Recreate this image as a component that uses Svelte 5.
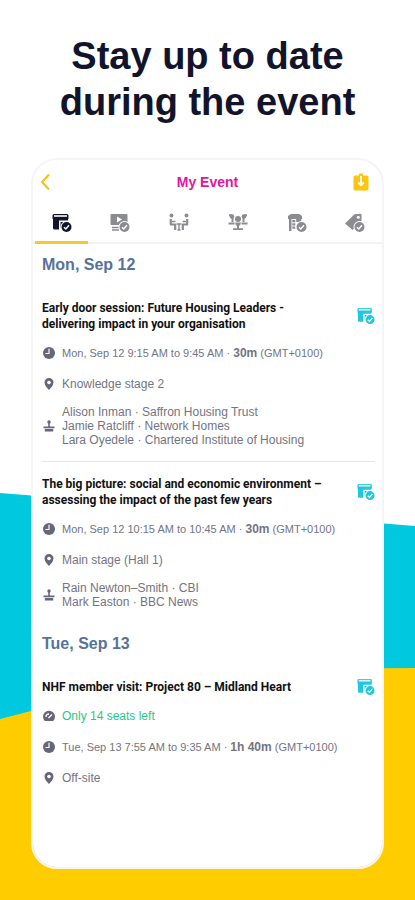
<script>
    const tabs = [
        { id: 'sessions', label: 'Sessions' },
        { id: 'videos', label: 'Videos' },
        { id: 'meetings', label: 'Meetings' },
        { id: 'speakers', label: 'Speakers' },
        { id: 'exhibitors', label: 'Exhibitors' },
        { id: 'offers', label: 'Offers' },
    ];

    const days = [
        {
            name: 'Mon, Sep 12',
            sessions: [
                {
                    title: 'Early door session: Future Housing Leaders - delivering impact in your organisation',
                    time: 'Mon, Sep 12 9:15 AM to 9:45 AM',
                    duration: '30m',
                    place: 'Knowledge stage 2',
                    people: [
                        'Alison Inman · Saffron Housing Trust',
                        'Jamie Ratcliff · Network Homes',
                        'Lara Oyedele · Chartered Institute of Housing',
                    ],
                },
                {
                    title: 'The big picture: social and economic environment – assessing the impact of the past few years',
                    time: 'Mon, Sep 12 10:15 AM to 10:45 AM',
                    duration: '30m',
                    place: 'Main stage (Hall 1)',
                    people: ['Rain Newton–Smith · CBI', 'Mark Easton · BBC News'],
                },
            ],
        },
        {
            name: 'Tue, Sep 13',
            sessions: [
                {
                    title: 'NHF member visit: Project 80 – Midland Heart',
                    seats: 'Only 14 seats left',
                    time: 'Tue, Sep 13 7:55 AM to 9:35 AM',
                    duration: '1h 40m',
                    place: 'Off-site',
                    people: [],
                },
            ],
        },
    ];

    let active = 'sessions';
</script>

{#snippet check()}
    <circle cx="14.5" cy="14" r="6" fill="#fff" />
    <circle cx="14.5" cy="14" r="5" fill="currentColor" />
    <path d="M12 14.200l1.800 1.800 3.200-3.700" fill="none" stroke="#fff" stroke-width="1.400" />
{/snippet}

{#snippet calendar()}
    <path d="M2 1h13a1.500 1.500 0 0 1 1.500 1.500V6H.5V2.500A1.500 1.500 0 0 1 2 1z" fill="currentColor" />
    <path d="M2 3h13" stroke="#fff" stroke-width="2" opacity=".8" />
    <path d="M1 5h15v2.500H7V16.500H2.500A1.500 1.500 0 0 1 1 15z" fill="currentColor" />
    <path d="M8.500 9h5l-2 2-2 3.500H8.500z" fill="currentColor" />
    {@render check()}
{/snippet}

<div class="page">
    <svg class="backdrop" viewBox="0 0 415 900" preserveAspectRatio="none" aria-hidden="true">
        <path d="M0 493L415 526V700L0 740z" fill="#00c8de" />
        <path d="M0 719L135 684Q190 669 260 669L415 668V900H0z" fill="#fc0" />
    </svg>

    <h1>Stay up to date<br />during the event</h1>

    <main class="card">
        <header>
            <button class="back" aria-label="Back">
                <svg width="10" height="18" viewBox="0 0 10 18"><path d="M9 1.500L2 9l7 7.500" fill="none" stroke="currentColor" stroke-width="2" /></svg>
            </button>
            <h2>My Event</h2>
            <button class="save" aria-label="Save to calendar">
                <svg width="16" height="18" viewBox="0 0 16 18">
                    <rect x=".5" y="2.500" width="15" height="15" rx="1.500" fill="currentColor" />
                    <path d="M6 3V1.500a1 1 0 0 1 1-1h2a1 1 0 0 1 1 1V3z" fill="currentColor" />
                    <path d="M8 3v8.500M5.200 9.500L8 12.300l2.800-2.800" fill="none" stroke="#fff" stroke-width="1.800" />
                </svg>
            </button>
        </header>

        <nav>
            {#each tabs as tab}
                <button class="tab" class:active={active === tab.id} aria-label={tab.label} on:click={() => (active = tab.id)}>
                    <svg width="20" height="20" viewBox="0 0 20 20">
                        {#if tab.id === 'sessions'}
                            {@render calendar()}
                        {:else if tab.id === 'videos'}
                            <rect x=".5" y="1" width="17" height="11" rx="1" fill="currentColor" />
                            <path d="M7 3.500v6l5-3z" fill="#fff" />
                            <path d="M2 14.500h7M2 17h7" stroke="currentColor" stroke-width="1.300" />
                            {@render check()}
                        {:else if tab.id === 'meetings'}
                            <circle cx="2.500" cy="2.500" r="1.900" fill="currentColor" />
                            <circle cx="17.500" cy="2.500" r="1.900" fill="currentColor" />
                            <path d="M1.800 6v5.500h4.400V17M18.200 6v5.500h-4.400V17" fill="none" stroke="currentColor" stroke-width="2.200" stroke-linejoin="round" />
                            <path d="M3 8.500h3.500M17 8.500h-3.500M7.500 11h5M10 11v5.500M8.500 17h3" stroke="currentColor" stroke-width="1.400" />
                        {:else if tab.id === 'speakers'}
                            <circle cx="4" cy="3.500" r="2.300" fill="currentColor" />
                            <circle cx="16" cy="3.500" r="2.300" fill="currentColor" />
                            <path d="M1 2.200h3M16 2.200h3M4.500 4v5M15.500 4v5" stroke="currentColor" stroke-width="2" />
                            <path d="M.5 10.500h6M13.500 10.500h6" stroke="currentColor" stroke-width="1.800" />
                            <circle cx="10" cy="6" r="3" fill="currentColor" />
                            <path d="M7 9.500h6l-1 3H8zM9 12h2v4H9zM5 15.200h10V17H5z" fill="currentColor" />
                        {:else if tab.id === 'exhibitors'}
                            <path d="M1 3L4 1h8l3 2v3H1z" fill="currentColor" />
                            <path d="M2 5h2.500v13H2zM5.300 7h3v2.300h-3zM9.200 6h5v3h-5zM5.300 10.200h3v2.300h-3zM5.300 13.400h3v2.300h-3z" fill="currentColor" />
                            {@render check()}
                        {:else}
                            <path d="M0 10.500L9.500 1.200 15 .8a1.500 1.500 0 0 1 1.600 1.600L16.500 8 7.500 17z" fill="currentColor" />
                            <circle cx="13.300" cy="4.200" r="1.500" fill="#fff" />
                            {@render check()}
                        {/if}
                    </svg>
                </button>
            {/each}
        </nav>

        <div class="agenda">
            {#each days as day}
                <h3>{day.name}</h3>
                {#each day.sessions as session}
                    <article>
                        <div class="top">
                            <h4>{session.title}</h4>
                            <button class="saved" aria-label="Remove from my event">
                                <svg width="18" height="18" viewBox="0 0 20 20">{@render calendar()}</svg>
                            </button>
                        </div>
                        {#if session.seats}
                            <div class="row seats">
                                <svg class="icon" viewBox="0 0 14 14">
                                    <path d="M2.800 12a6 6 0 1 1 8.400 0z" fill="currentColor" />
                                    <path d="M4 8a3 3 0 0 1 3-3M6.500 9L10 5.500" fill="none" stroke="#fff" stroke-width="1.300" />
                                </svg>
                                <span>{session.seats}</span>
                            </div>
                        {/if}
                        <div class="row time">
                            <svg class="icon" viewBox="0 0 14 14">
                                <circle cx="7" cy="7" r="6" fill="currentColor" />
                                <path d="M7 2.800V7.500H3.500" fill="none" stroke="#fff" stroke-width="1.200" />
                            </svg>
                            <span>{session.time} · <b>{session.duration}</b> (GMT+0100)</span>
                        </div>
                        <div class="row">
                            <svg class="icon" viewBox="0 0 14 14">
                                <path d="M7 1a4.500 4.500 0 0 1 4.500 4.500C11.500 8.500 8.500 11 7 13 5.500 11 2.500 8.500 2.500 5.500A4.500 4.500 0 0 1 7 1z" fill="currentColor" />
                                <circle cx="7" cy="5.500" r="1.800" fill="#fff" />
                            </svg>
                            <span>{session.place}</span>
                        </div>
                        {#if session.people.length}
                            <div class="row people">
                                <svg class="icon" viewBox="0 0 14 14">
                                    <circle cx="7" cy="3" r="1.700" fill="currentColor" />
                                    <path d="M6.200 4h1.600v3.500H6.200zM1.500 7.500h11v1.700h-11zM2.800 10h8.400v2.500H2.800z" fill="currentColor" />
                                </svg>
                                <ul>
                                    {#each session.people as person}
                                        <li>{person}</li>
                                    {/each}
                                </ul>
                            </div>
                        {/if}
                    </article>
                {/each}
            {/each}
        </div>
    </main>
</div>

<style>
    :global(body) {
        margin: 0;
        background: #fff;
    }

    .page {
        position: relative;
        display: flex;
        flex-direction: column;
        box-sizing: border-box;
        min-height: 100vh;
        padding: 33px 31px 31px;
        font-family: 'Liberation Sans', Arial, sans-serif;
    }

    .backdrop {
        position: absolute;
        inset: 0;
        width: 100%;
        height: 100%;
    }

    h1, h2, h3, h4, ul {
        margin: 0;
        padding: 0;
    }

    h1 {
        position: relative;
        margin-bottom: 33px;
        color: #12142b;
        font-size: 38px;
        line-height: 46px;
        text-align: center;
        white-space: nowrap;
    }

    button {
        display: flex;
        padding: 0;
        border: 0;
        background: none;
        cursor: pointer;
    }

    .card {
        position: relative;
        flex: 1;
        border: 2px solid #f5f5f6;
        border-radius: 26px;
        background: #fff;
        background-clip: padding-box;
        overflow: hidden;
    }

    header {
        display: grid;
        grid-template-columns: 1fr auto 1fr;
        align-items: center;
        height: 44px;
        padding: 0 7px;
    }

    h2 {
        color: #e0179b;
        font-size: 14px;
        line-height: 20px;
    }

    .back {
        color: #f5c211;
    }

    .save {
        justify-self: end;
        margin-right: 6px;
        color: #fbc60d;
    }

    nav {
        display: flex;
        justify-content: space-between;
        height: 38px;
        padding-left: 2px;
        border-bottom: 2px solid #f3f3f4;
    }

    .tab {
        align-items: center;
        justify-content: center;
        width: 53px;
        margin-bottom: -2px;
        border-bottom: 3px solid transparent;
        color: #8b8c90;
    }

    .tab.active {
        border-color: #f5c830;
        color: #12142b;
    }

    .agenda {
        padding: 0 7px 0 9px;
    }

    h3 {
        padding: 11px 0;
        color: #55739a;
        font-size: 16px;
        line-height: 20px;
    }

    article {
        padding: 14px 0;
    }

    article + article {
        border-top: 1px solid #e6e6e8;
    }

    .top {
        display: flex;
        align-items: center;
        justify-content: space-between;
        gap: 24px;
        margin-bottom: 13px;
    }

    h4 {
        color: #111;
        font-family: Roboto, 'Liberation Sans', sans-serif;
        font-size: 12px;
        line-height: 16px;
    }

    .saved {
        flex: none;
        margin: -1px 0;
        color: #1fc8de;
    }

    .row {
        display: flex;
        align-items: center;
        gap: 6px;
        color: #74747f;
        font-size: 12px;
        line-height: 16px;
    }

    .row + .row {
        margin-top: 15px;
    }

    .row + .people {
        margin-top: 13px;
        line-height: 14px;
    }

    .time {
        font-size: 11px;
    }

    .time b {
        font-size: 12px;
    }

    .seats span {
        color: #2dc58a;
    }

    .icon {
        flex: none;
        width: 14px;
        height: 14px;
        color: #66667a;
    }

    ul {
        list-style: none;
    }
</style>
